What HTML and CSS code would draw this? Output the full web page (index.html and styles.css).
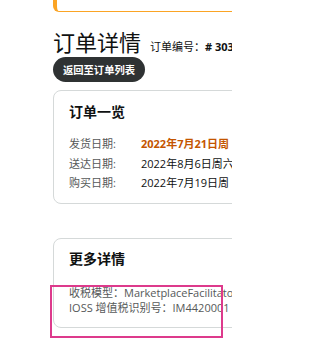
FILE: index.html
```html
<!DOCTYPE html>
<html lang="zh-CN">
<head>
<meta charset="utf-8">
<title>订单详情</title>
<link rel="stylesheet" href="styles.css">
</head>
<body>
<div class="viewport">
  <div class="page">
    <div class="alert"></div>
    <div class="title-row">
      <h1 class="title">订单详情</h1>
      <span class="order-no">订单编号：<b># 303</b></span>
    </div>
    <a class="back-btn" href="#">返回至订单列表</a>

    <section class="card">
      <h2 class="card-title">订单一览</h2>
      <div class="summary">
        <span class="label">发货日期:</span><span class="value ship">2022年7月21日周</span>
        <span class="label">送达日期:</span><span class="value">2022年8月6日周六</span>
        <span class="label">购买日期:</span><span class="value">2022年7月19日周</span>
      </div>
    </section>

    <section class="card card-more">
      <h2 class="card-title">更多详情</h2>
      <div class="more">
        <div class="more-row">收税模型：MarketplaceFacilitator</div>
        <div class="more-row">IOSS 增值税识别号：IM4420001</div>
      </div>
    </section>
  </div>
  <div class="highlight"></div>
</div>
</body>
</html>
```

FILE: styles.css
```css
html, body {
  margin: 0;
  padding: 0;
  width: 232px;
  height: 342px;
  overflow: hidden;
  background: #ffffff;
}

body {
  font-family: "Open Sans", "Noto Sans CJK SC", sans-serif;
  color: #0f1111;
  white-space: nowrap;
}

.viewport {
  position: relative;
  width: 232px;
  height: 342px;
  overflow: hidden;
}

.page {
  padding-left: 53px;
}

.alert {
  width: 320px;
  height: 11px;
  border: 1px solid #fba424;
  border-top: 0;
  border-left-width: 4px;
  border-radius: 0 0 0 6px;
}

.title-row {
  display: flex;
  align-items: baseline;
  gap: 9px;
  margin-top: 17px;
}

.title {
  margin: 0;
  font-size: 22px;
  line-height: 26px;
  font-weight: 400;
  color: #0f1111;
}

.order-no {
  font-size: 11px;
  color: #0f1111;
}

.order-no b {
  font-weight: 700;
}

.back-btn {
  display: flex;
  align-items: center;
  justify-content: center;
  width: 92px;
  height: 25px;
  margin-top: 2px;
  border-radius: 13px;
  background: #2f3233;
  color: #ffffff;
  font-size: 10.3px;
  font-weight: 700;
  text-decoration: none;
}

.card {
  width: 320px;
  margin-top: 8px;
  padding: 12px 15px 10px;
  border: 1px solid #d5d9d9;
  border-radius: 8px;
}

.card-more {
  margin-top: 34px;
  padding: 11px 15px 11px;
}

.card-title {
  margin: 0;
  font-size: 14px;
  line-height: 18px;
  font-weight: 700;
  color: #0f1111;
}

.summary {
  display: grid;
  grid-template-columns: 72px auto;
  margin-top: 13px;
  font-size: 11px;
  line-height: 19.5px;
}

.label {
  color: #565959;
}

.value {
  color: #0f1111;
}

.value.ship {
  color: #c45500;
  font-weight: 700;
}

.more {
  margin-top: 17px;
  font-size: 11px;
  line-height: 15.5px;
  color: #565959;
}

.highlight {
  position: absolute;
  left: 50px;
  top: 285px;
  width: 173px;
  height: 53px;
  box-sizing: border-box;
  border: 2px solid #dd3a8c;
}
```
